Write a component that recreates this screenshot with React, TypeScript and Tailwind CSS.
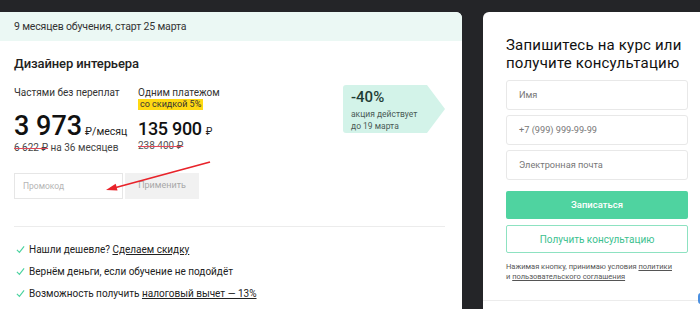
import React from "react";

const Check = () => (
  <svg width="9" height="9" viewBox="0 0 10 9" className="mr-[4px] shrink-0">
    <path d="M1 5 L3.8 7.8 L9 1" fill="none" stroke="#4cd3a0" strokeWidth="1.3" />
  </svg>
);

export default function App() {
  return (
    <div className="w-[700px] h-[309px] bg-[#242528] pt-3 flex gap-[21px] overflow-hidden whitespace-nowrap" style={{ fontFamily: "Roboto, 'Noto Sans', sans-serif" }}>
      {/* Left card */}
      <div className="w-[462px] h-[320px] bg-white rounded-tr-[6px] flex flex-col shrink-0 relative">
        <div className="h-[29px] bg-[#ebf8f4] rounded-tr-[6px] flex items-center pl-[14px] text-[10.5px] tracking-[-0.15px] text-[#333]">
          9 месяцев обучения, старт 25 марта
        </div>
        <div className="pl-[14px] pr-[17px] pt-[15px] flex flex-col">
          <div className="text-[13px] font-medium text-[#222] leading-[16px] tracking-[-0.1px]">Дизайнер интерьера</div>
          <div className="flex mt-[14px]">
            <div className="w-[124px] flex flex-col">
              <div className="text-[10px] text-[#333] leading-[14px]">Частями без переплат</div>
              <div className="flex items-baseline mt-[13px] leading-[26px]">
                <span className="text-[27px] font-medium text-[#111] leading-[26px]">3 973</span>
                <span className="text-[10.5px] text-[#222] ml-[3px] leading-[12px]">₽/месяц</span>
              </div>
              <div className="text-[10px] text-[#444] leading-[14px] mt-[2px]">
                <span className="line-through decoration-[#e04a5a]">6 622 ₽</span> на 36 месяцев
              </div>
            </div>
            <div className="flex flex-col">
              <div className="text-[10px] text-[#333] leading-[14px]">Одним платежом</div>
              <div className="mt-[-1px] flex"><span className="bg-[#ffd912] text-[9px] text-[#333] px-[2px] leading-[11px]">со скидкой 5%</span></div>
              <div className="flex items-baseline leading-[19px] mt-[9px]">
                <span className="text-[18px] font-medium text-[#111] leading-[19px] tracking-[-0.3px]">135 900</span>
                <span className="text-[10px] text-[#222] ml-[4px] leading-[12px]">₽</span>
              </div>
              <div className="text-[10px] text-[#555] leading-[14px] mt-[1px]">
                <span className="line-through decoration-[#e04a5a]">238 400 ₽</span>
              </div>
            </div>
            <div className="ml-auto mt-[-1px] relative h-[48px] w-[102px]">
              <svg className="absolute inset-0" width="102" height="48" viewBox="0 0 102 48">
                <path d="M3 0 H84 L102 24 L84 48 H3 Q0 48 0 45 V3 Q0 0 3 0 Z" fill="#d3f3e9" />
              </svg>
              <div className="relative pl-[8px] pt-[3px] flex flex-col">
                <span className="text-[15px] font-medium text-[#1f3d35] leading-[19px]">-40%</span>
                <span className="text-[8.5px] text-[#4a5a56] leading-[12px] mt-[1px]">акция действует</span>
                <span className="text-[8.5px] text-[#4a5a56] leading-[12px]">до 19 марта</span>
              </div>
            </div>
          </div>
          <div className="flex mt-[18px] gap-[2px]">
            <div className="w-[109px] h-[26px] border border-[#e6e6e6] flex items-center pl-[8px] text-[8.5px] text-[#b5b5b5]">Промокод</div>
            <div className="w-[74px] h-[26px] bg-[#f1f1f1] flex items-center justify-center text-[9px] text-[#a8a8a8]">Применить</div>
          </div>
          <div className="h-px bg-[#ececec] mt-[27px]"></div>
          <div className="flex flex-col mt-[16px] gap-[9px] text-[10px] text-[#222] leading-[13px] pl-[2px]">
            <div className="flex items-center"><Check />Нашли дешевле?&nbsp;<span className="underline">Сделаем скидку</span></div>
            <div className="flex items-center"><Check />Вернём деньги, если обучение не подойдёт</div>
            <div className="flex items-center"><Check />Возможность получить&nbsp;<span className="underline">налоговый вычет — 13%</span></div>
          </div>
        </div>
        <svg className="absolute left-0 top-0 pointer-events-none" width="462" height="309">
          <path d="M210 150 L114 176" stroke="#e8232a" strokeWidth="1.8" />
          <path d="M106 178 L115.7 171.7 L117.5 178.5 Z" fill="#e8232a" />
        </svg>
      </div>
      {/* Right card */}
      <div className="flex-1 h-[320px] bg-white rounded-tl-[6px] flex flex-col relative">
        <div className="pl-[23px] pr-[12px] pt-[24px] flex flex-col">
          <div className="text-[15px] text-[#111] leading-[18px] tracking-[0.2px] whitespace-normal">Запишитесь на курс или получите консультацию</div>
          <div className="flex flex-col gap-[5px] mt-[8px]">
            <div className="h-[30px] border border-[#e8e8e8] rounded-[3px] flex items-center pl-[12px] text-[9.2px] text-[#777]">Имя</div>
            <div className="h-[30px] border border-[#e8e8e8] rounded-[3px] flex items-center pl-[12px] text-[9.2px] text-[#777]">+7 (999) 999-99-99</div>
            <div className="h-[30px] border border-[#e8e8e8] rounded-[3px] flex items-center pl-[12px] text-[9.2px] text-[#777]">Электронная почта</div>
          </div>
          <div className="h-[28px] bg-[#4fd3a0] rounded-[2px] mt-[11px] flex items-center justify-center text-[9.5px] font-medium text-white">Записаться</div>
          <div className="h-[28px] border border-[#8de2c1] rounded-[2px] mt-[6px] flex items-center justify-center text-[10px] text-[#3cc18f]">Получить консультацию</div>
          <div className="mt-[9px] text-[7.5px] text-[#555] leading-[10px]">
            Нажимая кнопку, принимаю условия <span className="underline">политики</span><br />и <span className="underline">пользовательского соглашения</span>
          </div>
        </div>
        <div className="h-px bg-[#ececec] mt-[18px]"></div>
        <div className="absolute right-[-4px] top-[281px] w-[6px] h-[11px] rounded-[3px] bg-[#4a8fe0]"></div>
      </div>
    </div>
  );
}
